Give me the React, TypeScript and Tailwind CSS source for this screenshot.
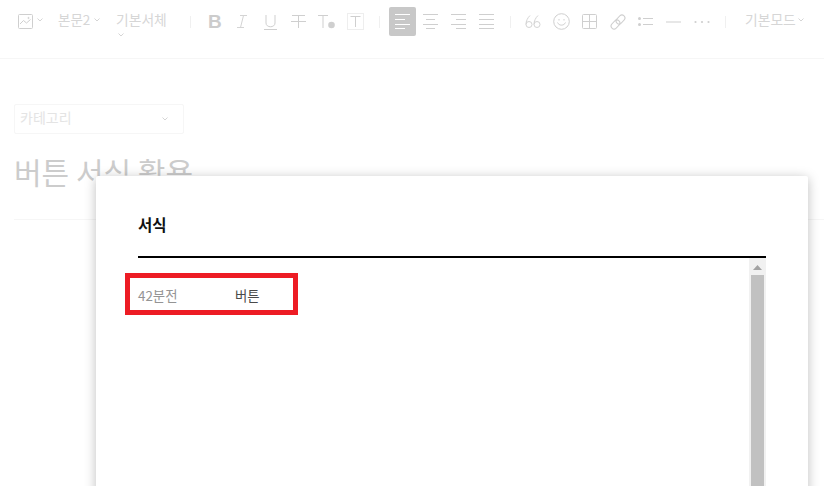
const font = { fontFamily: '"Noto Sans CJK KR", "Liberation Sans", sans-serif' };

const Chev = ({ className = "" }: { className?: string }) => (
  <svg width="6" height="4" viewBox="0 0 6 4" fill="none" stroke="#d0d0d0" strokeWidth="0.9" className={className}>
    <path d="M0.5 0.5 L3 3 L5.5 0.5" />
  </svg>
);

const Sep = ({ className = "" }: { className?: string }) => <div className={`w-px h-3 bg-[#f0f0f0] shrink-0 ${className}`} />;

const Ico = ({ w, h = 16, children, className = "" }: { w: number; h?: number; children: React.ReactNode; className?: string }) => (
  <svg width={w} height={h} viewBox={`0 0 ${w} ${h}`} fill="none" stroke="#cfcfcf" strokeWidth="1" className={`shrink-0 overflow-visible ${className}`}>
    {children}
  </svg>
);

const Lines = ({ kind, color = "#cfcfcf" }: { kind: "left" | "center" | "right" | "just"; color?: string }) => {
  const d = {
    left: "M0 1.5H15M0 6.5H10M0 11.5H15M0 15.5H10",
    center: "M0 1.5H15M3 6.5H12M0 11.5H15M3 15.5H12",
    right: "M0 1.5H15M5 6.5H15M0 11.5H15M5 15.5H15",
    just: "M0 1.5H15M0 6.5H15M0 11.5H15M0 15.5H15",
  }[kind];
  return (
    <svg width="15" height="17" viewBox="0 0 15 17" fill="none" stroke={color} strokeWidth="1" className="shrink-0">
      <path d={d} />
    </svg>
  );
};

function Toolbar() {
  return (
    <div className="h-[59px] border-b border-[#f6f6f6] flex items-start pt-[7px] pl-[18px] text-[#d6d6d6] relative">
      <div className="h-[29px] flex items-center shrink-0">
        <Ico w={15} h={15}>
          <rect x="0.5" y="0.5" width="14" height="14" rx="1" />
          <path d="M2 10 L5.5 6.5 L8.5 9 L12.5 5.5" />
          <circle cx="10.5" cy="4" r="0.6" />
        </Ico>
        <Chev className="ml-[4px] mb-[3px]" />
        <span className="ml-[15px] mb-[4px] text-[13.5px] leading-none w-[33px] whitespace-nowrap">본문2</span>
        <Chev className="ml-[3px] mb-[3px]" />
        <span className="ml-[16px] mb-[4px] text-[13.8px] leading-none w-[51px] whitespace-nowrap">기본서체</span>
        <Sep className="ml-[23px]" />
        <span className="ml-[17px] w-[13px] text-[19px] font-bold leading-none text-[#cccccc]" style={{ fontFamily: '"Liberation Sans", sans-serif' }}>B</span>
        <svg width="10" height="13" viewBox="0 0 10 13" fill="none" stroke="#d4d4d4" className="ml-[16px] shrink-0">
          <path d="M3 0.5H10M6.5 0.5L3.5 12.5M0 12.5H7" />
        </svg>
        <Ico w={13} className="ml-[17px]">
          <path d="M2 1V9C2 14 11 14 11 9V1M0 15.5H13" />
        </Ico>
        <Ico w={15} className="ml-[14px]">
          <path d="M1 1.5H14M7.5 1.5V14M0 7.5H15" />
        </Ico>
        <svg width="17" height="16" viewBox="0 0 17 16" fill="none" className="ml-[12px] shrink-0">
          <path d="M0 1.5H10M5 1.5V14" stroke="#cfcfcf" />
          <circle cx="13.5" cy="11" r="3.3" fill="#cfcfcf" />
        </svg>
        <svg width="17" height="17" viewBox="0 0 17 17" fill="none" className="ml-[12px] shrink-0">
          <rect x="0.5" y="0.5" width="16" height="16" stroke="#eeeeee" />
          <path d="M3.5 3.5H13.5M8.5 3.5V14" stroke="#cfcfcf" />
        </svg>
        <Sep className="ml-[15px]" />
        <div className="ml-[9px] w-[27px] h-[29px] rounded-[2px] bg-[#c8c8c8] flex items-center justify-center shrink-0">
          <Lines kind="left" color="#ffffff" />
        </div>
        <div className="ml-[7px] flex gap-[13px]">
          <Lines kind="center" />
          <Lines kind="right" />
          <Lines kind="just" />
        </div>
        <Sep className="ml-[16px]" />
        <svg width="16" height="14" viewBox="0 0 16 14" fill="none" stroke="#d4d4d4" className="ml-[14px] shrink-0">
          <path d="M5 0.5C2.5 3 1 6 1 9.5a3 3 0 1 0 6 0a3 3 0 0 0-6 0" />
          <path d="M13 0.5C10.5 3 9 6 9 9.5a3 3 0 1 0 6 0a3 3 0 0 0-6 0" />
        </svg>
        <Ico w={17} h={17} className="ml-[12px]">
          <circle cx="8.5" cy="8.5" r="7.8" />
          <path d="M4.5 9.5C6 13 11 13 12.5 9.5M6 6V7.5M11 6V7.5" />
        </Ico>
        <Ico w={15} h={15} className="ml-[12px]">
          <rect x="0.5" y="0.5" width="14" height="14" rx="1" />
          <path d="M7.5 0.5V14.5M0.5 7.5H14.5" />
        </Ico>
        <Ico w={16} h={16} className="ml-[13px]">
          <rect x="2.5" y="5.5" width="6" height="10" rx="3" transform="rotate(45 5.5 10.5)" />
          <rect x="7.5" y="0.5" width="6" height="10" rx="3" transform="rotate(45 10.5 5.5)" />
        </Ico>
        <svg width="15" height="10" viewBox="0 0 15 10" fill="none" className="ml-[12px] shrink-0">
          <circle cx="1.5" cy="1.5" r="1.5" fill="#cfcfcf" />
          <circle cx="1.5" cy="7.5" r="1.5" fill="#cfcfcf" />
          <path d="M5 1.5H15M5 7.5H15" stroke="#cfcfcf" />
        </svg>
        <Ico w={15} h={2} className="ml-[13px]">
          <path d="M0 1H15" />
        </Ico>
        <svg width="16" height="4" viewBox="0 0 16 4" className="ml-[13px] shrink-0">
          <circle cx="1.5" cy="2" r="1.1" fill="#cfcfcf" />
          <circle cx="8" cy="2" r="1.1" fill="#cfcfcf" />
          <circle cx="14.5" cy="2" r="1.1" fill="#cfcfcf" />
        </svg>
        <Sep className="ml-[15px]" />
        <span className="ml-[19px] mb-[4px] text-[13.8px] leading-none w-[51px] whitespace-nowrap">기본모드</span>
        <Chev className="ml-[2px] mb-[3px]" />
      </div>
      <Chev className="absolute left-[118px] top-[33px]" />
    </div>
  );
}

function Background() {
  return (
    <div className="pl-[14px] pt-[45px]">
      <div className="w-[170px] h-[30px] border border-[#f6f6f6] rounded-[2px] flex items-center justify-between pl-[5px] pr-[15px] text-[14px] text-[#e4e4e4]">
        <span className="mb-[3px]">카테고리</span>
        <Chev />
      </div>
      <div className="mt-[17px] h-[69px] border-b border-[#f6f6f6] text-[30px] leading-[40px] text-[#cccccc] whitespace-nowrap">버튼 서식 활용</div>
    </div>
  );
}

function Modal() {
  return (
    <div className="absolute left-[96px] top-[176px] w-[712px] h-[340px] bg-white rounded-[2px] shadow-[0_2px_12px_rgba(0,0,0,0.26)] pt-[39px] pl-[42px] pr-[42px]">
      <div className="h-[43px] border-b-2 border-black text-[15.5px] leading-[18px] font-bold text-[#111111]">서식</div>
      <div className="flex h-[300px]">
        <div className="flex-1 pt-[15px]">
          <div className="-ml-[13px] w-[173px] h-[42px] border-[5px] border-[#ed1c24] flex items-center pt-[2px] pl-[8px] text-[13.4px] whitespace-nowrap">
            <span className="w-[97px] text-[#949494]">42분전</span>
            <span className="text-[#4a4a4a]">버튼</span>
          </div>
        </div>
        <div className="w-[17px] bg-[#f1f1f1] flex flex-col items-center shrink-0">
          <svg width="9" height="5" viewBox="0 0 9 5" className="mt-[7px] shrink-0">
            <path d="M4.5 0 L9 5 H0 Z" fill="#a3a3a3" />
          </svg>
          <div className="mt-[5px] w-[13px] flex-1 bg-[#c1c1c1]" />
        </div>
      </div>
    </div>
  );
}

export default function App() {
  return (
    <div className="relative w-[824px] h-[486px] overflow-hidden bg-white" style={font}>
      <Toolbar />
      <Background />
      <Modal />
    </div>
  );
}
